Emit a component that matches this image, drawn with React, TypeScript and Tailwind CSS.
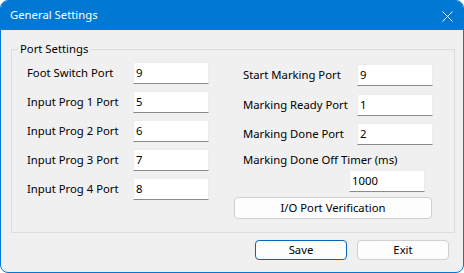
import React from "react";

const font = { fontFamily: '"Segoe UI", "Noto Sans", "Liberation Sans", sans-serif' };

function Field({ value, className = "" }: { value: string; className?: string }) {
  return (
    <div
      className={
        "h-[22px] w-[76px] shrink-0 bg-white border border-[#ececec] border-b-[#8a8a8a] flex items-center pl-[2px] text-[11.3px] text-black " +
        className
      }
    >
      {value}
    </div>
  );
}

export default function App() {
  const left = [
    ["Foot Switch Port", "9"],
    ["Input Prog 1 Port", "5"],
    ["Input Prog 2 Port", "6"],
    ["Input Prog 3 Port", "7"],
    ["Input Prog 4 Port", "8"],
  ];
  return (
    <div className="w-[464px] h-[273px] bg-white" style={font}>
      <div className="w-full h-full rounded-[8px] border border-[#0078d4] bg-[#f0f0f0] flex flex-col overflow-hidden text-[11.3px] text-[#1a1a1a] whitespace-nowrap">
        <div className="h-[29px] shrink-0 bg-[#0078d4] flex items-center justify-between pl-[9px] pr-[10px] text-white text-[11.3px]">
          <span>General Settings</span>
          <svg width="11" height="11" viewBox="0 0 11 11" className="mt-[1px]">
            <path d="M0.5 0.5 L10.5 10.5 M10.5 0.5 L0.5 10.5" stroke="white" strokeWidth="1" />
          </svg>
        </div>
        <fieldset className="mt-[11px] ml-[10px] mr-[8px] h-[192px] border border-[#dcdcdc] p-0 m-0">
          <legend className="ml-[6px] px-[2px] h-[16px] leading-[16px] text-black">Port Settings</legend>
          <div className="flex">
            <div className="pl-[15px] pt-[5px] flex flex-col gap-[7px] shrink-0">
              {left.map(([l, v]) => (
                <div key={l} className="flex items-center h-[22px]">
                  <span className="w-[106px] shrink-0 text-black">{l}</span>
                  <Field value={v} />
                </div>
              ))}
            </div>
            <div className="ml-[25px] pt-[7px] flex flex-col shrink-0">
              <div className="flex items-center h-[22px]">
                <span className="w-[123px] shrink-0 pl-[9px] text-black">Start Marking Port</span>
                <Field value="9" />
              </div>
              <div className="flex items-center h-[22px] mt-[8px]">
                <span className="w-[123px] shrink-0 pl-[9px] text-black">Marking Ready Port</span>
                <Field value="1" />
              </div>
              <div className="flex items-center h-[22px] mt-[7px]">
                <span className="w-[123px] shrink-0 pl-[9px] text-black">Marking Done Port</span>
                <Field value="2" />
              </div>
              <div className="pl-[9px] mt-[7px] h-[16px] leading-[16px] text-black">Marking Done Off Timer (ms)</div>
              <Field value="1000" className="ml-[115px] mt-[2px]" />
              <div className="mt-[5px] w-[198px] h-[22px] rounded-[4px] border border-[#d0d0d0] bg-[#fdfdfd] flex items-center justify-center text-black">
                I/O Port Verification
              </div>
            </div>
          </div>
        </fieldset>
        <div className="flex justify-end gap-[10px] pr-[14px] mt-[7px]">
          <div className="w-[92px] h-[20px] rounded-[4px] border border-[#0067c0] bg-[#fdfdfd] flex items-center justify-center text-black">
            Save
          </div>
          <div className="w-[92px] h-[20px] rounded-[4px] border border-[#d0d0d0] bg-[#fdfdfd] flex items-center justify-center text-black">
            Exit
          </div>
        </div>
      </div>
    </div>
  );
}
